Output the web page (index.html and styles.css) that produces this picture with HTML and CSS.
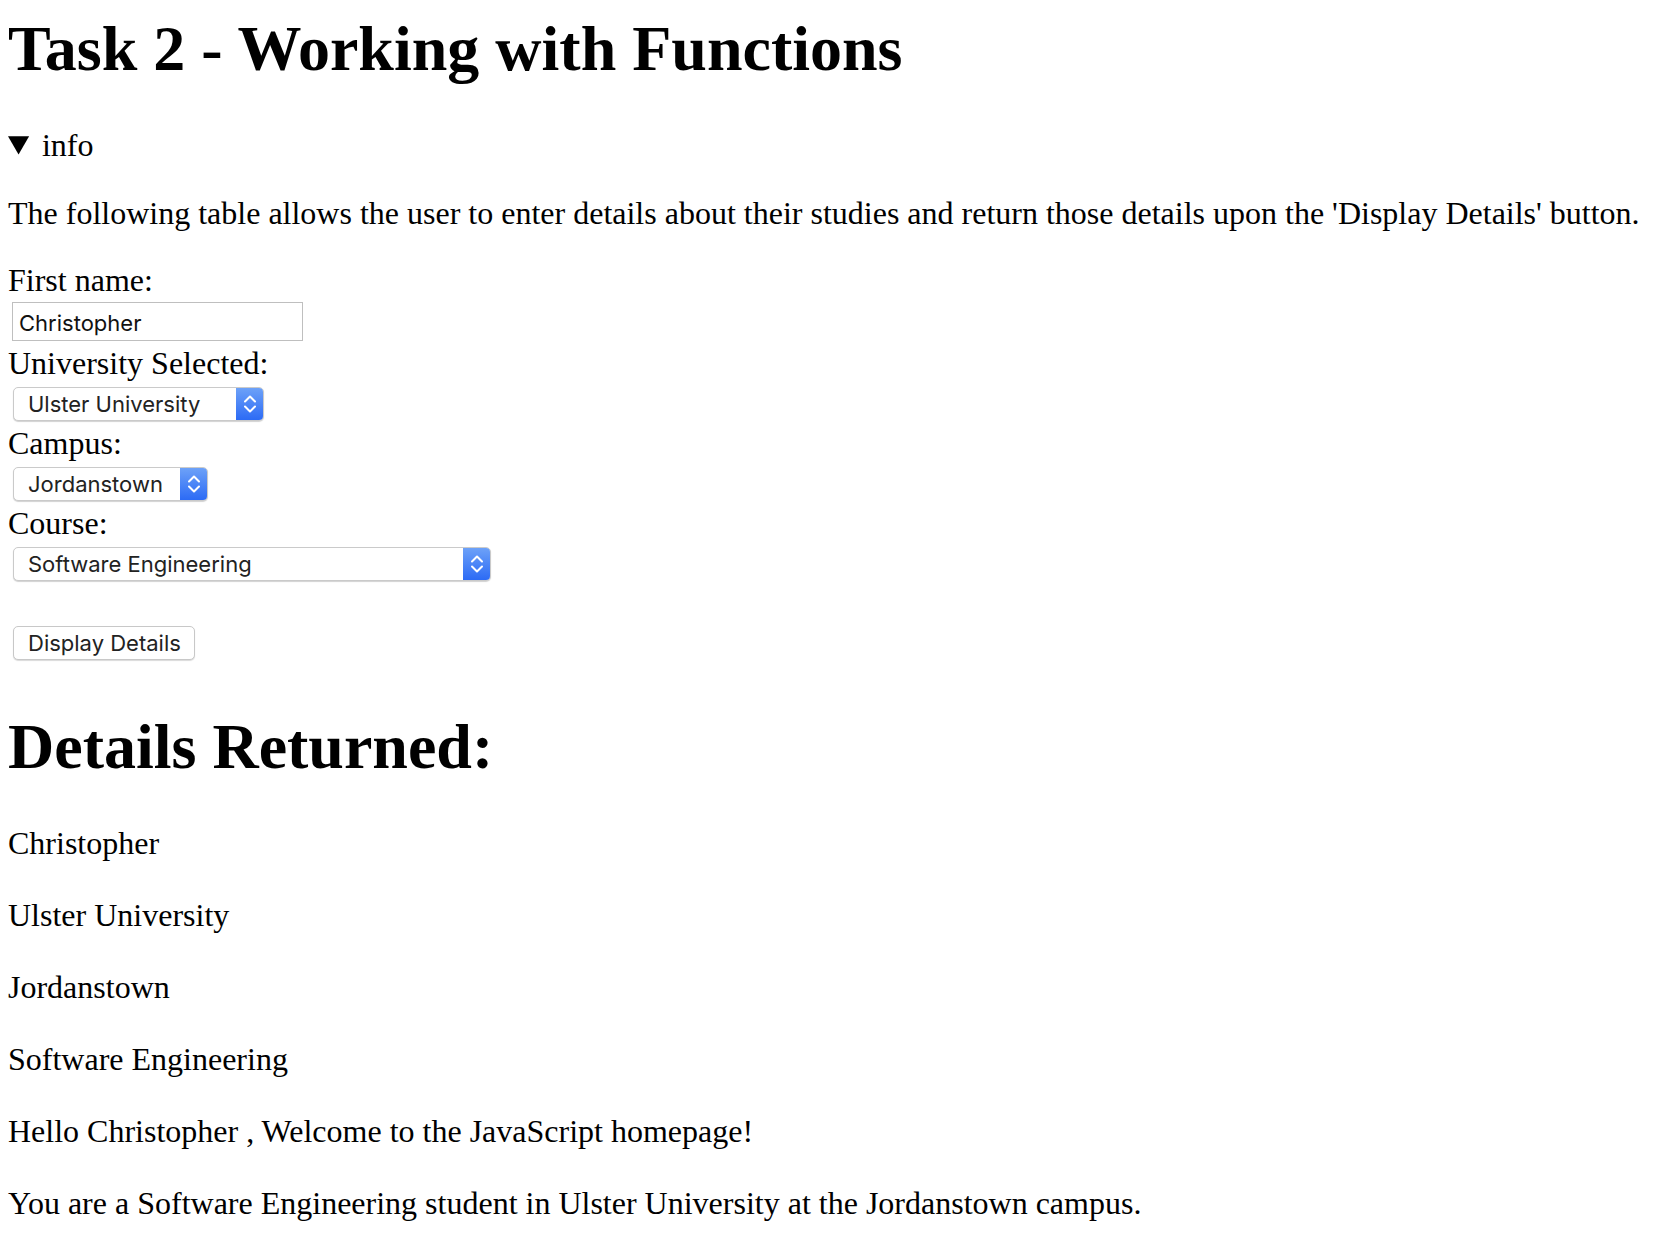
FILE: index.html
```html
<!DOCTYPE html>
<html lang="en">
<head>
<meta charset="utf-8">
<title>Task 2 - Working with Functions</title>
<link rel="stylesheet" href="styles.css">
</head>
<body>
<h1 class="title">Task 2 - Working with Functions</h1>
<details class="info" open>
  <summary class="info-summary">info</summary>
  <p class="intro">The following table allows the user to enter details about their studies and return those details upon the 'Display Details' button.</p>
</details>
<form class="form">
  <label class="label" for="fname">First name:</label>
  <input class="text-input" id="fname" type="text" value="Christopher">
  <label class="label" for="uni">University Selected:</label>
  <div class="select select-uni">
    <select class="select-field" id="uni"><option>Ulster University</option></select>
    <span class="select-arrow"><svg class="chev" width="16" height="24" viewBox="0 0 16 24"><path d="M3 9.5 L8 4.5 L13 9.5 M3 14.5 L8 19.5 L13 14.5" fill="none" stroke="#fff" stroke-width="2" stroke-linecap="round" stroke-linejoin="round"/></svg></span>
  </div>
  <label class="label" for="campus">Campus:</label>
  <div class="select select-campus">
    <select class="select-field" id="campus"><option>Jordanstown</option></select>
    <span class="select-arrow"><svg class="chev" width="16" height="24" viewBox="0 0 16 24"><path d="M3 9.5 L8 4.5 L13 9.5 M3 14.5 L8 19.5 L13 14.5" fill="none" stroke="#fff" stroke-width="2" stroke-linecap="round" stroke-linejoin="round"/></svg></span>
  </div>
  <label class="label" for="course">Course:</label>
  <div class="select select-course">
    <select class="select-field" id="course"><option>Software Engineering</option></select>
    <span class="select-arrow"><svg class="chev" width="16" height="24" viewBox="0 0 16 24"><path d="M3 9.5 L8 4.5 L13 9.5 M3 14.5 L8 19.5 L13 14.5" fill="none" stroke="#fff" stroke-width="2" stroke-linecap="round" stroke-linejoin="round"/></svg></span>
  </div>
  <button class="btn" type="button">Display Details</button>
</form>
<h1 class="results-title">Details Returned:</h1>
<p class="result">Christopher</p>
<p class="result">Ulster University</p>
<p class="result">Jordanstown</p>
<p class="result">Software Engineering</p>
<p class="result">Hello Christopher , Welcome to the JavaScript homepage!</p>
<p class="result">You are a Software Engineering student in Ulster University at the Jordanstown campus.</p>
</body>
</html>
```

FILE: styles.css
```css
html, body {
  background: #fff;
}
body {
  margin: 0;
  padding: 12px 8px 8px 8px;
  font-family: "Liberation Serif", "Times New Roman", serif;
  font-size: 32px;
  line-height: 40px;
  color: #000;
}
.title,
.results-title {
  font-size: 64px;
  line-height: 74px;
  font-weight: bold;
  margin: 0 0 39px 0;
}
.results-title {
  margin-top: 50px;
}
.info {
  margin: 0;
}
.info-summary {
  cursor: default;
}
.intro {
  margin: 28px 0 0 0;
}
.form {
  margin: 27px 0 0 0;
  display: flex;
  flex-direction: column;
  align-items: flex-start;
}
.label {
  display: block;
}
.text-input {
  box-sizing: border-box;
  width: 291px;
  height: 39px;
  margin: 2px 0 2px 4px;
  padding: 3px 0 0 6px;
  border: 1px solid #bfbfbf;
  border-radius: 0;
  font-family: Inter, "Noto Sans", sans-serif;
  font-size: 22px;
  color: #111;
  background: #fff;
  outline: none;
}
.select {
  box-sizing: border-box;
  display: flex;
  height: 34px;
  margin: 4px 0 2px 5px;
  border: 1px solid #cacaca;
  border-radius: 5px;
  overflow: hidden;
  background: #fff;
  box-shadow: 0 1px 1px rgba(0, 0, 0, 0.18);
}
.select-uni { width: 251px; }
.select-campus { width: 195px; }
.select-course { width: 478px; }
.select-field {
  appearance: none;
  -webkit-appearance: none;
  flex: 1;
  min-width: 0;
  border: none;
  background: transparent;
  padding: 0 0 0 14px;
  margin: 0;
  font-family: Inter, "Noto Sans", sans-serif;
  font-size: 22px;
  color: #222;
  outline: none;
}
.select-arrow {
  width: 28px;
  flex: none;
  display: flex;
  align-items: center;
  justify-content: center;
  background: linear-gradient(#6fa3f8, #2a69f5);
  margin: -1px -1px -1px 0;
}
.chev {
  display: block;
}
.btn {
  box-sizing: border-box;
  height: 34px;
  margin: 43px 0 0 5px;
  padding: 0 13px 0 14px;
  border: 1px solid #c8c8c8;
  border-radius: 5px;
  background: #fff;
  box-shadow: 0 1px 1px rgba(0, 0, 0, 0.15);
  font-family: Inter, "Noto Sans", sans-serif;
  font-size: 22px;
  color: #222;
}
.result {
  margin: 0 0 32px 0;
}
```
